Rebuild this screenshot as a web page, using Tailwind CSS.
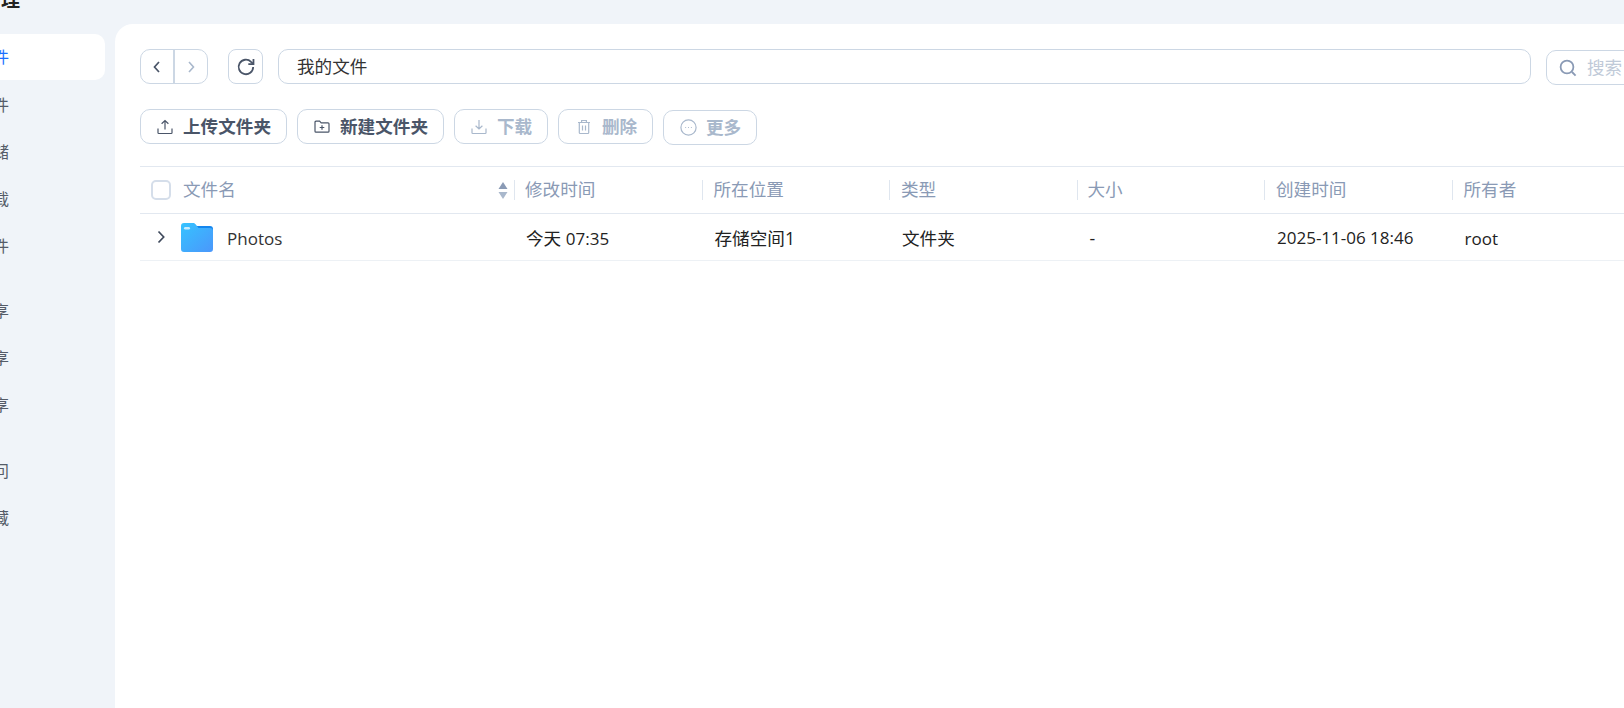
<!DOCTYPE html>
<html lang="zh-CN">
<head>
  <meta charset="UTF-8">
  <title>文件管理</title>
  <script src="https://cdn.jsdelivr.net/npm/@tailwindcss/browser@4"></script>
</head>
<body class="bg-[#f0f4f9] font-['Open_Sans','Noto_Sans_CJK_SC',sans-serif] text-[17.6px] overflow-hidden">
  <div class="flex h-[708px] w-[1624px] overflow-hidden">

    <!-- Sidebar, cropped on the left -->
    <aside class="w-[115px] shrink-0 overflow-hidden text-[16px] text-[#555c68]">
      <div class="h-[34px] -mt-[13px] pt-0 flex items-start">
        <span class="w-[20px] h-[26px] flex justify-end whitespace-nowrap font-bold text-[19px] leading-[26px] text-[#222]">文件管理</span>
      </div>
      <div class="mt-[13px]"></div>
      <div class="h-[46px] w-[105px] mb-px flex items-center bg-white rounded-r-[10px] text-[#1a6fff]"><span class="w-[9px] flex justify-end whitespace-nowrap">我的文件</span></div>
      <div class="h-[47px] w-[105px] flex items-center"><span class="w-[9px] flex justify-end whitespace-nowrap">最近文件</span></div>
      <div class="h-[47px] w-[105px] flex items-center"><span class="w-[9px] flex justify-end whitespace-nowrap">外部存储</span></div>
      <div class="h-[47px] w-[105px] flex items-center"><span class="w-[9px] flex justify-end whitespace-nowrap">离线下载</span></div>
      <div class="h-[47px] w-[105px] flex items-center"><span class="w-[9px] flex justify-end whitespace-nowrap">共享文件</span></div>
      <div class="h-[47px] w-[105px] mt-[18px] flex items-center"><span class="w-[9px] flex justify-end whitespace-nowrap">我的共享</span></div>
      <div class="h-[47px] w-[105px] flex items-center"><span class="w-[9px] flex justify-end whitespace-nowrap">与我共享</span></div>
      <div class="h-[47px] w-[105px] flex items-center"><span class="w-[9px] flex justify-end whitespace-nowrap">团队共享</span></div>
      <div class="h-[47px] w-[105px] mt-[19px] flex items-center"><span class="w-[9px] flex justify-end whitespace-nowrap">最近访问</span></div>
      <div class="h-[47px] w-[105px] flex items-center"><span class="w-[9px] flex justify-end whitespace-nowrap">我的收藏</span></div>
    </aside>

    <!-- Main panel -->
    <main class="mt-[24px] flex-1 min-w-0 overflow-hidden bg-white rounded-tl-[18px] pl-[25px] pt-[25px]">

      <!-- Address bar -->
      <div class="flex items-start">
        <div class="flex shrink-0 h-[35px] w-[68px] rounded-[10px] border border-[#ccd7e4]">
          <div class="w-[34px] flex items-center justify-center border-r-2 border-[#ccd7e4]">
            <svg class="w-[16px] h-[16px]" viewBox="0 0 16 16" fill="none" stroke="#4a5568" stroke-width="1.7"><path d="M10 3 5.500 8l4.500 5"/></svg>
          </div>
          <div class="flex-1 flex items-center justify-center">
            <svg class="w-[16px] h-[16px]" viewBox="0 0 16 16" fill="none" stroke="#a9b8cc" stroke-width="1.6"><path d="m6 3 4.500 5L6 13"/></svg>
          </div>
        </div>
        <div class="ml-[20px] shrink-0 w-[35px] h-[35px] rounded-[8px] border border-[#ccd7e4] flex items-center justify-center">
          <svg class="w-[20px] h-[20px]" viewBox="0 0 19 19" fill="none" stroke="#4a5568" stroke-width="1.7"><path d="M16.300 9.500a6.900 6.900 0 1 1-2-4.900l2 1.900"/><path d="M16.600 1.800v4.900h-4.900"/></svg>
        </div>
        <div class="ml-[15px] shrink-0 w-[1253px] h-[35px] rounded-[10px] border border-[#ccd7e4] pl-[18px] flex items-center text-[#333]">我的文件</div>
        <div class="ml-[15px] mt-px shrink-0 w-[200px] h-[35px] rounded-[10px] border border-[#ccd7e4] pl-[12px] flex items-center text-[#c0cad8]">
          <svg class="w-[18px] h-[18px] mr-[10px]" viewBox="0 0 18 18" fill="none" stroke="#8a9ab5" stroke-width="1.8"><circle cx="8" cy="8" r="6.400"/><path d="m13 13 3.600 3.600"/></svg>
          搜索
        </div>
      </div>

      <!-- Actions -->
      <div class="flex items-start gap-[10px] mt-[24px] font-bold">
        <div class="h-[35px] w-[147px] rounded-[10px] border border-[#ccd7e4] pl-[16px] flex items-center text-[#4a5568]">
          <svg class="w-[16px] h-[16px] mr-[10px]" viewBox="0 0 16 16" fill="none" stroke="#4a5568" stroke-width="1.2"><path d="M8 10.500V1.500M4.600 4.800 8 1.500l3.400 3.300M1 9.500v4.200c0 .5.4.8.8.8h12.400c.4 0 .8-.3.8-.8V9.500"/></svg>
          上传文件夹
        </div>
        <div class="h-[35px] w-[147px] rounded-[10px] border border-[#ccd7e4] pl-[16px] flex items-center text-[#4a5568]">
          <svg class="w-[16px] h-[16px] mr-[10px]" viewBox="0 0 16 16" fill="none" stroke="#4a5568" stroke-width="1.2"><path d="M1 3.200c0-.6.4-1 1-1h3.600l1.600 1.600H14c.6 0 1 .4 1 1v7.400c0 .6-.4 1-1 1H2c-.6 0-1-.4-1-1z"/><path d="M8 6.200v4.600M5.700 8.500h4.600"/></svg>
          新建文件夹
        </div>
        <div class="h-[35px] w-[94px] rounded-[10px] border border-[#ccd7e4] pl-[16px] flex items-center text-[#a9b8cc]">
          <svg class="w-[16px] h-[16px] mr-[10px]" viewBox="0 0 16 16" fill="none" stroke="#a9b8cc" stroke-width="1.2"><path d="M8 1v9M4.600 6.800 8 10l3.400-3.200M1 9.500v4.200c0 .5.4.8.8.8h12.400c.4 0 .8-.3.8-.8V9.500"/></svg>
          下载
        </div>
        <div class="h-[35px] w-[95px] rounded-[10px] border border-[#ccd7e4] pl-[17px] flex items-center text-[#a9b8cc]">
          <svg class="w-[16px] h-[16px] mr-[10px]" viewBox="0 0 16 16" fill="none" stroke="#a9b8cc" stroke-width="1.2"><path d="M2 3.500h12M5.600 3.500V1.500h4.800v2M3.300 3.500v10.200c0 .5.4.8.8.8h7.800c.4 0 .8-.3.8-.8V3.500M6.500 6.500v5M9.500 6.500v5"/></svg>
          删除
        </div>
        <div class="mt-px h-[35px] w-[94px] rounded-[10px] border border-[#ccd7e4] pl-[16px] flex items-center text-[#a9b8cc]">
          <svg class="w-[17px] h-[17px] mr-[9px]" viewBox="0 0 17 17" fill="none" stroke="#a9b8cc" stroke-width="1.2"><circle cx="8.500" cy="8.500" r="7.600"/><path d="M5.200 8.500h.9M8 8.500h.9M10.900 8.500h.9"/></svg>
          更多
        </div>
      </div>

      <!-- File table -->
      <div class="mt-[21px] w-[1500px]">
        <div class="grid grid-cols-[374px_repeat(6,187.500px)] h-[48px] items-center border-y border-[#e2e8f0] text-[#8a9ab5]">
          <div class="flex items-center pl-[11px] h-[20px]">
            <span class="w-[20px] h-[20px] rounded-[5px] border-2 border-[#d5deea]"></span>
            <span class="ml-[12px] pb-[2px]">文件名</span>
            <svg class="ml-auto mr-[6px] w-[10px] h-[19px]" viewBox="0 0 10 19"><path d="M5 1l4.500 7H.5z" fill="#8a9ab5"/><path d="M5 18l4.500-7H.5z" fill="#a9b8cc"/></svg>
          </div>
          <div class="h-[20px] border-l border-[#dfe6ef] pl-[10px] pb-[2px] flex items-center">修改时间</div>
          <div class="h-[20px] border-l border-[#dfe6ef] pl-[11px] pb-[2px] flex items-center">所在位置</div>
          <div class="h-[20px] border-l border-[#dfe6ef] pl-[11px] pb-[2px] flex items-center">类型</div>
          <div class="h-[20px] border-l border-[#dfe6ef] pl-[10px] pb-[2px] flex items-center">大小</div>
          <div class="h-[20px] border-l border-[#dfe6ef] pl-[11px] pb-[2px] flex items-center">创建时间</div>
          <div class="h-[20px] border-l border-[#dfe6ef] pl-[11px] pb-[2px] flex items-center">所有者</div>
        </div>
        <div class="grid grid-cols-[374px_repeat(6,187.500px)] h-[47px] items-center border-b border-[#edf1f5] text-[#222]">
          <div class="flex items-center pl-[16px]">
            <svg class="w-[10px] h-[14px] -mt-px" viewBox="0 0 10 14" fill="none" stroke="#3f4a5c" stroke-width="1.7"><path d="m2.500 1.500 5.200 5.500-5.200 5.500"/></svg>
            <svg class="ml-[15px] w-[32px] h-[29px]" viewBox="0 0 32 29">
              <defs><linearGradient id="folderFill" x1="0" y1="0" x2="1" y2="1"><stop offset="0" stop-color="#35c3ff"/><stop offset="1" stop-color="#4b97fb"/></linearGradient></defs>
              <path d="M14 3h15a3 3 0 0 1 3 3v4H14z" fill="#1486ee"/>
              <path d="M0 3a3 3 0 0 1 3-3h9c1.500 0 2 .6 3 1.800l2.500 3.200H29a3 3 0 0 1 3 3v18a3 3 0 0 1-3 3H3a3 3 0 0 1-3-3z" fill="url(#folderFill)"/>
              <rect x="3" y="4" width="6" height="2.400" rx="1.200" fill="#c5ecff"/>
            </svg>
            <span class="ml-[14px] pt-[4px] text-[17px] text-[#333]">Photos</span>
          </div>
          <div class="pl-[12px] pt-[2px]">今天 <span class="text-[17px]">07:35</span></div>
          <div class="pl-[13px] pt-[2px]">存储空间1</div>
          <div class="pl-[13px] pt-[2px]">文件夹</div>
          <div class="pl-[13px] pt-[2px]">-</div>
          <div class="pl-[13px] pt-[2px] text-[17px]">2025-11-06 18:46</div>
          <div class="pl-[13px] pt-[3px] text-[17px]">root</div>
        </div>
      </div>
    </main>
  </div>
</body>
</html>
